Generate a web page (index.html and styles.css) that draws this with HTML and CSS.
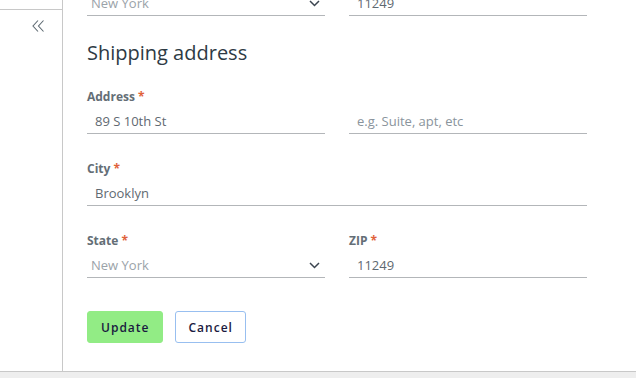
FILE: index.html
```html
<!DOCTYPE html>
<html>
<head>
<meta charset="utf-8">
<link rel="stylesheet" href="styles.css">
</head>
<body>
<div class="app">
  <div class="main">
    <aside class="sidebar">
      <div class="sidebar-top"></div>
      <button class="collapse" aria-label="Collapse">
        <svg width="12" height="12" viewBox="0 0 12 12"><polyline points="6,0.5 1,6 6,11.5" fill="none" stroke="#5e6a72" stroke-width="1.1"/><polyline points="11.5,0.5 6.5,6 11.5,11.5" fill="none" stroke="#5e6a72" stroke-width="1.1"/></svg>
      </button>
    </aside>
    <section class="content">
      <div class="row row-cut">
        <div class="field">
          <div class="select"><span class="select-text">New York</span><svg class="chev" width="11" height="7" viewBox="0 0 11 7"><polyline points="1,1 5.5,5.5 10,1" fill="none" stroke="#3b4550" stroke-width="1.5"/></svg></div>
        </div>
        <div class="field">
          <div class="input">11249</div>
        </div>
      </div>

      <h2 class="heading">Shipping address</h2>

      <div class="row">
        <div class="field">
          <label class="label">Address <span class="req">*</span></label>
          <div class="input">89 S 10th St</div>
        </div>
        <div class="field">
          <label class="label label-empty">&nbsp;</label>
          <div class="input placeholder">e.g. Suite, apt, etc</div>
        </div>
      </div>

      <div class="row row-full">
        <div class="field">
          <label class="label">City <span class="req">*</span></label>
          <div class="input">Brooklyn</div>
        </div>
      </div>

      <div class="row">
        <div class="field">
          <label class="label">State <span class="req">*</span></label>
          <div class="select"><span class="select-text">New York</span><svg class="chev" width="11" height="7" viewBox="0 0 11 7"><polyline points="1,1 5.5,5.5 10,1" fill="none" stroke="#3b4550" stroke-width="1.5"/></svg></div>
        </div>
        <div class="field">
          <label class="label">ZIP <span class="req">*</span></label>
          <div class="input">11249</div>
        </div>
      </div>

      <div class="actions">
        <button class="btn btn-primary">Update</button>
        <button class="btn btn-outline">Cancel</button>
      </div>
    </section>
  </div>
  <div class="footer-bar"></div>
</div>
</body>
</html>
```

FILE: styles.css
```css
html, body {
  margin: 0;
  padding: 0;
  height: 100%;
  background: #fff;
  font-family: "Open Sans", "Noto Sans", sans-serif;
  overflow: hidden;
}

.app {
  display: flex;
  flex-direction: column;
  height: 378px;
}

.main {
  flex: 1;
  display: flex;
  min-height: 0;
  overflow: hidden;
}

.sidebar {
  width: 62px;
  flex: none;
  border-right: 1px solid #c8c8c8;
  display: flex;
  flex-direction: column;
  align-items: flex-end;
}

.sidebar-top {
  align-self: stretch;
  height: 9px;
  border-bottom: 1px solid #c8c8c8;
}

.collapse {
  margin: 10px 18px 0 0;
  padding: 0;
  border: 0;
  background: none;
  width: 12px;
  height: 12px;
  display: flex;
}

.content {
  flex: 1;
  padding-left: 24px;
  display: flex;
  flex-direction: column;
}

.row {
  display: grid;
  grid-template-columns: 238px 238px;
  column-gap: 24px;
  margin-bottom: 26px;
}

.row-full {
  grid-template-columns: 500px;
}

.row-cut {
  margin-top: -9px;
  margin-bottom: 0;
}

.field {
  display: flex;
  flex-direction: column;
}

.label {
  height: 18px;
  line-height: 18px;
  font-size: 12px;
  font-weight: 700;
  color: #646e76;
  margin-bottom: 3px;
}

.req {
  color: #e0623b;
  font-weight: 700;
}

.input {
  height: 24px;
  line-height: 24px;
  padding-left: 8px;
  font-size: 13px;
  color: #5f6971;
  border-bottom: 1px solid #b3b6b9;
}

.placeholder {
  color: #8a949c;
}

.select {
  height: 24px;
  border-bottom: 1px solid #b3b6b9;
  display: flex;
  align-items: center;
  justify-content: space-between;
  padding: 0 4px 0 4px;
}

.select-text {
  font-size: 13px;
  color: #9ba3a9;
}

.chev {
  margin-right: 1px;
}

.heading {
  margin: 24px 0 22px 0;
  font-size: 20px;
  line-height: 26px;
  font-weight: 400;
  color: #2e3a44;
}

.actions {
  display: flex;
  gap: 12px;
  margin-top: 7px;
}

.btn {
  height: 32px;
  padding: 0 13px;
  border-radius: 3px;
  font-family: "Open Sans", sans-serif;
  font-size: 12px;
  font-weight: 600;
  letter-spacing: 1px;
  color: #1a1a40;
  cursor: pointer;
}

.btn-primary {
  background: #92ec85;
  border: 1px solid #92ec85;
}

.btn-outline {
  padding: 0 12px;
  background: #fff;
  border: 1px solid #98bff0;
}

.footer-bar {
  height: 6px;
  flex: none;
  border-top: 1px solid #c8c8c8;
  background: #eeeeee;
}
```
